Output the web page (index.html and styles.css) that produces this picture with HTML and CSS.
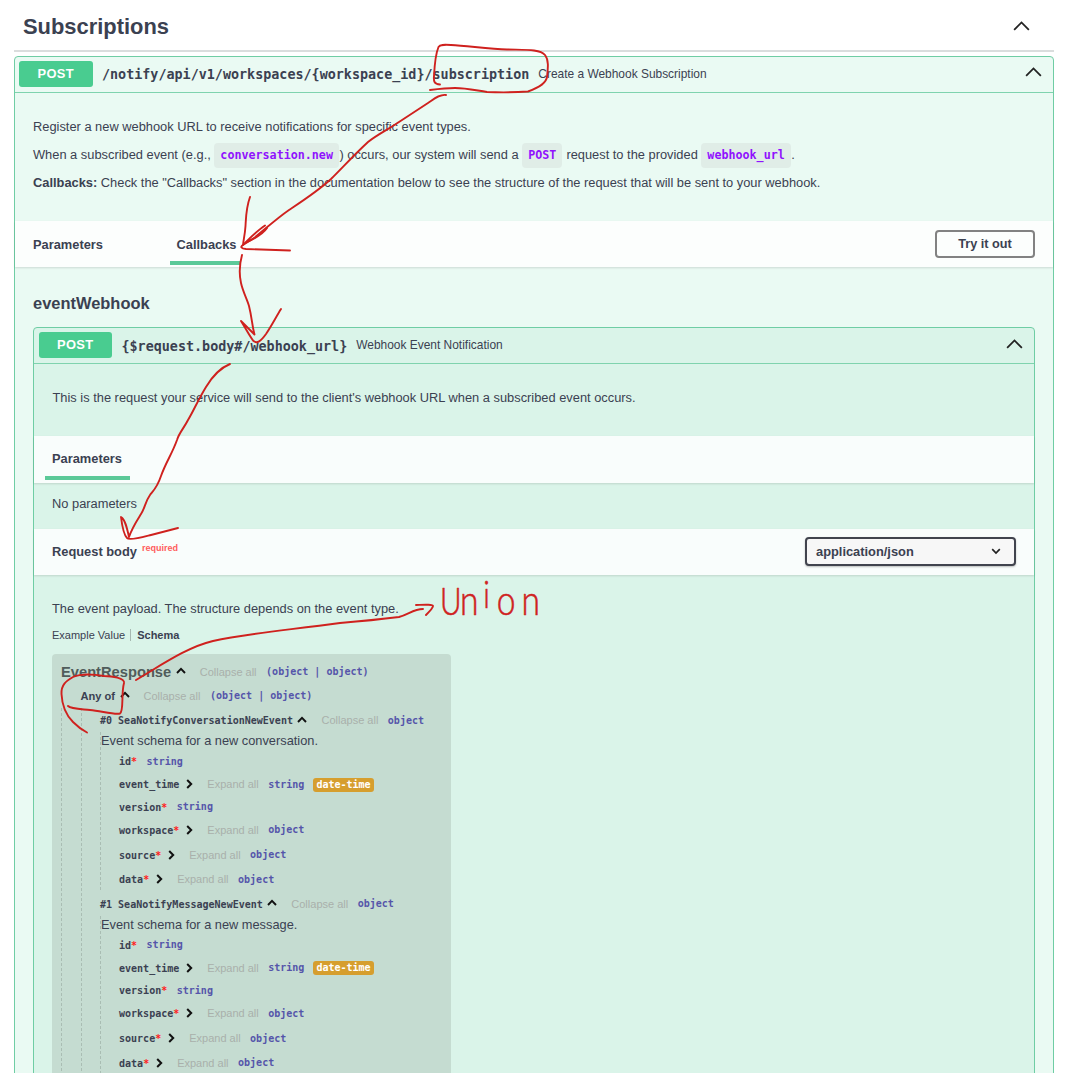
FILE: index.html
```html
<!DOCTYPE html>
<html lang="en">
<head>
<meta charset="utf-8">
<title>Subscriptions</title>
<link rel="stylesheet" href="styles.css">
</head>
<body>
<main class="page">
  <header class="tag-header">
    <h1>Subscriptions</h1>
    <svg class="chevron" viewBox="0 0 18 10"><path d="M1.2 9 9 1.2 16.8 9"/></svg>
  </header>

  <section class="opblock">
    <div class="summary">
      <span class="method">POST</span>
      <span class="path">/notify/api/v1/workspaces/{workspace_id}/subscription</span>
      <span class="summary-text">Create a Webhook Subscription</span>
      <svg class="chevron" viewBox="0 0 18 10"><path d="M1.2 9 9 1.2 16.8 9"/></svg>
    </div>
    <div class="description">
      <p>Register a new webhook URL to receive notifications for specific event types.</p>
      <p>When a subscribed event (e.g., <code>conversation.new</code>) occurs, our system will send a <code>POST</code> request to the provided <code>webhook_url</code>.</p>
      <p><b>Callbacks:</b> Check the "Callbacks" section in the documentation below to see the structure of the request that will be sent to your webhook.</p>
    </div>
    <div class="section-header tabs">
      <span class="tab tab-first">Parameters</span>
      <span class="tab tab-callbacks active">Callbacks</span>
      <button class="try">Try it out</button>
    </div>

    <div class="callbacks">
      <h2>eventWebhook</h2>
      <section class="opblock inner">
        <div class="summary">
          <span class="method">POST</span>
          <span class="path">{$request.body#/webhook_url}</span>
          <span class="summary-text">Webhook Event Notification</span>
          <svg class="chevron" viewBox="0 0 18 10"><path d="M1.2 9 9 1.2 16.8 9"/></svg>
        </div>
        <div class="description single">
          <p>This is the request your service will send to the client's webhook URL when a subscribed event occurs.</p>
        </div>
        <div class="section-header">
          <span class="tab tab-inner active">Parameters</span>
        </div>
        <p class="no-params">No parameters</p>
        <div class="section-header body-header">
          <span class="body-title">Request body</span><span class="required">required</span>
          <div class="select">application/json
            <svg viewBox="0 0 10 7"><path d="M1.2 1.2 5 5 8.8 1.2"/></svg>
          </div>
        </div>
        <div class="payload">
          <p>The event payload. The structure depends on the event type.</p>
          <div class="model-tabs"><span>Example Value</span><b>Schema</b></div>
          <div class="model">
            <div class="row root"><strong class="title">EventResponse</strong><svg class="up" viewBox="0 0 10 7"><path d="M1 6 5 1.8 9 6"/></svg><span class="toggle">Collapse all</span><span class="type">(object | object)</span></div>
            <div class="level-one">
              <div class="row any"><strong class="any-of">Any of</strong><svg class="up" viewBox="0 0 10 7"><path d="M1 6 5 1.8 9 6"/></svg><span class="toggle">Collapse all</span><span class="type">(object | object)</span></div>
              <div class="level-two">
                <article class="schema">
                  <div class="row head"><span class="name">#0 SeaNotifyConversationNewEvent</span><svg class="up" viewBox="0 0 10 7"><path d="M1 6 5 1.8 9 6"/></svg><span class="toggle">Collapse all</span><span class="type">object</span></div>
                  <div class="fields">
                    <p class="note">Event schema for a new conversation.</p>
                    <div class="row id"><span class="name">id<i>*</i></span><span class="type">string</span></div>
                    <div class="row time"><span class="name">event_time</span><svg class="right" viewBox="0 0 7 10"><path d="M1.2 1 5.2 5 1.2 9"/></svg><span class="toggle">Expand all</span><span class="type">string</span><span class="format">date-time</span></div>
                    <div class="row version"><span class="name">version<i>*</i></span><span class="type">string</span></div>
                    <div class="row obj"><span class="name">workspace<i>*</i></span><svg class="right" viewBox="0 0 7 10"><path d="M1.2 1 5.2 5 1.2 9"/></svg><span class="toggle">Expand all</span><span class="type">object</span></div>
                    <div class="row obj"><span class="name">source<i>*</i></span><svg class="right" viewBox="0 0 7 10"><path d="M1.2 1 5.2 5 1.2 9"/></svg><span class="toggle">Expand all</span><span class="type">object</span></div>
                    <div class="row last"><span class="name">data<i>*</i></span><svg class="right" viewBox="0 0 7 10"><path d="M1.2 1 5.2 5 1.2 9"/></svg><span class="toggle">Expand all</span><span class="type">object</span></div>
                  </div>
                </article>
                <article class="schema">
                  <div class="row head"><span class="name">#1 SeaNotifyMessageNewEvent</span><svg class="up" viewBox="0 0 10 7"><path d="M1 6 5 1.8 9 6"/></svg><span class="toggle">Collapse all</span><span class="type">object</span></div>
                  <div class="fields">
                    <p class="note">Event schema for a new message.</p>
                    <div class="row id"><span class="name">id<i>*</i></span><span class="type">string</span></div>
                    <div class="row time"><span class="name">event_time</span><svg class="right" viewBox="0 0 7 10"><path d="M1.2 1 5.2 5 1.2 9"/></svg><span class="toggle">Expand all</span><span class="type">string</span><span class="format">date-time</span></div>
                    <div class="row version"><span class="name">version<i>*</i></span><span class="type">string</span></div>
                    <div class="row obj"><span class="name">workspace<i>*</i></span><svg class="right" viewBox="0 0 7 10"><path d="M1.2 1 5.2 5 1.2 9"/></svg><span class="toggle">Expand all</span><span class="type">object</span></div>
                    <div class="row obj"><span class="name">source<i>*</i></span><svg class="right" viewBox="0 0 7 10"><path d="M1.2 1 5.2 5 1.2 9"/></svg><span class="toggle">Expand all</span><span class="type">object</span></div>
                    <div class="row last"><span class="name">data<i>*</i></span><svg class="right" viewBox="0 0 7 10"><path d="M1.2 1 5.2 5 1.2 9"/></svg><span class="toggle">Expand all</span><span class="type">object</span></div>
                  </div>
                </article>
              </div>
            </div>
          </div>
        </div>
      </section>
    </div>
  </section>

  <svg class="annotations" viewBox="0 0 1066 1073">
    <!-- loop round the path's last segment -->
    <path d="M440 84.500C434 84 433.500 81 434 76C434.500 66 436 53 438.500 47C440 44.500 444 44.500 451 45C468 46 490 49 507 49.500C525 50 540 49 545 55C549 60 548 68 547 77C546 84 535 89 528 91.500C514 92.500 500 92.500 487 92C474 90 466 88 455 88C446 88 438 89 430 90"/>
    <!-- arrow to the Callbacks tab -->
    <path d="M446 95C440 94 434 99 428 103L399 122C389 129 378 134 368 142C355 154 344 166 331 179C318 191 301 202 289 210C276 219 263 231 254 238L243 245"/>
    <path d="M250 197C246 208 246 217 245.500 226C245 234 243.500 240 243 245C240 247 241 248.500 246 249L290 250.500"/>
    <path d="M265 225.500C258 230 252 236 245 243C254 239 263 234 267 228"/>
    <!-- arrow to the callback path -->
    <path d="M242 255C239 266 239 274 241 283C243 292 247 299 249 306C252 318 252 325 254.500 334.500L241 321C246 329 249 335 253 340.500C257 344.500 261 341 266 334C272 325 276 317 281 309"/>
    <!-- arrow to the request body -->
    <path d="M230 364C220 368 212 377 206 387C198 400 193 412 188 420C184 428 179 433 177 440C172 454 166 462 161 476C157 488 153 491 150 495C145 502 145 508 141 514C136 522 132 528 129 537C127 528 125 519 121 517C122 525 124 535 127 538C129 541 143 537 151 535L178 528"/>
    <!-- loop round "Any of" and the arrow to its note -->
    <path d="M68 706C71 709 80 709 90 710C101 711 115 715 120 713.500C124 711 121 694 124 683C125 678 112 676 104 676C92 674 80 674 73 677C66 681 61 685 61.500 694C62 705 66 715 73 722C78 727 82 730 87 732.500"/>
    <path d="M136 680C160 666 187 647 213 641C248 633 290 630 340 623C364 621 383 619 399 617C409 614 414 609 423 609M416 605C420 605 433 604 433 606C433 608 429 612 426 615"/>
    <text class="note-text" transform="translate(440 615) scale(.8 1)"><tspan x="0">U</tspan><tspan class="wide" x="25">n</tspan><tspan x="54" dy="-7">i</tspan><tspan class="wide" x="71 102" dy="7">on</tspan></text>
  </svg>
</main>
</body>
</html>
```
FILE: styles.css
```css
* { box-sizing: border-box; }
body { margin: 0; background: #fff; color: #3b4151; font: 12.85px "Liberation Sans", Arial, sans-serif; }
p, h1, h2 { margin: 0; }
.page { position: relative; height: 1073px; overflow: hidden; padding: 0 12px 0 14px; }
.tag-header { display: flex; align-items: center; justify-content: space-between; height: 52px; margin-bottom: 4px; padding: 4px 24px 0 9px; border-bottom: 2px solid #dadddd; }
h1 { font-size: 21.9px; line-height: 26px; }
.chevron { flex: none; width: 17px; height: 10px; fill: none; stroke: #222; stroke-width: 1.9; }
.tag-header .chevron { margin-top: -2px; }

.opblock { height: 1040px; border: 1px solid #6fcda4; border-radius: 4px; background: #eafaf3; }
.summary { display: flex; align-items: center; height: 36px; padding: 0 11px 0 4px; border-bottom: 1px solid #7fd3ae; }
.summary .chevron { margin: -5px 0 0 auto; }
.inner .summary .chevron { margin-top: -2px; }
.method { width: 73.500px; height: 26px; margin-top: -1px; border-radius: 3px; background: #49cc90; color: #fff; font-weight: 700; font-size: 12.9px; line-height: 26px; text-align: center; letter-spacing: .3px; }
.path { margin-left: 9.500px; font: bold 13.4px "DejaVu Sans Mono", monospace; }
.summary-text { margin: -2px 0 0 9px; font-size: 11.950px; }
.inner .path { padding-top: 2px; }
.inner .method { margin-left: .5px; }
.inner .summary-text { margin-top: 0; }
.description { height: 128px; padding: 20px 18px 0; white-space: nowrap; }
.description p { height: 28px; line-height: 28px; }
code { display: inline-block; height: 25px; padding: 0 6px; margin: 0 .5px 0 0; border-radius: 4px; background: #e0ede7; color: #9012fe; font: bold 11.7px/25px "DejaVu Sans Mono", monospace; }
.section-header { display: flex; align-items: center; height: 46px; padding: 0 18px; background: rgba(255,255,255,.83); box-shadow: 0 1px 2px rgba(0,0,0,.13); font-weight: 700; }
.tab { display: flex; align-items: center; height: 100%; }
.tab-first { width: 137px; }
.active { height: 44px; padding: 6px 4px 0 6.500px; border-bottom: 4px solid #5bc998; align-self: flex-start; }
.tab-inner { height: 44px; width: 85px; margin-left: -7px; padding: 5px 7px 0; }
.try { width: 100px; height: 28px; margin-left: auto; border: 2px solid #828282; border-radius: 4px; background: transparent; color: #3b4151; font: bold 12.7px "Liberation Sans", Arial, sans-serif; }

.callbacks { padding: 27px 18px 0; }
h2 { height: 33px; font-size: 16.45px; line-height: 19px; }
.inner { background: #daf4e9; }
.inner .summary { height: 35.500px; }
.description.single { height: 72px; padding-left: 18.500px; }
.no-params { height: 46px; line-height: 41px; padding-left: 18px; }
.inner .section-header { height: 47px; }
.required { align-self: flex-start; margin: 14px 0 0 5px; color: #ff5c5c; font-size: 9px; line-height: 11px; }
.inner .body-header { height: 46px; }
.select { display: flex; align-items: center; justify-content: space-between; width: 211px; height: 29px; margin-left: auto; padding: 0 13px 0 9px; border: 2px solid #41444e; border-radius: 4px; background: #f7f7f7; box-shadow: 0 1px 2px rgba(0,0,0,.25); }
.select svg { width: 10px; height: 7px; fill: none; stroke: #222; stroke-width: 1.7; }

.payload { padding: 20px 18px 0; }
.payload > p { height: 28px; line-height: 28px; }
.model-tabs { display: flex; align-items: center; height: 25px; font-size: 11px; }
.model-tabs b { margin-left: 5px; padding-left: 6px; border-left: 1px solid #a6b8b1; }
.model { width: 399px; height: 430px; margin-top: 6px; padding: 6.500px 0 0 9px; border-radius: 4px; background: #c5dcd1; }
.row { display: flex; align-items: center; white-space: nowrap; }
.title { font-size: 14.7px; color: #505c5b; }
.any-of { font-size: 11.1px; }
.root { height: 23px; }
.any { height: 25px; }
.level-two { display: flex; flex-direction: column; padding-left: 19.500px; background: linear-gradient(#a9bdb3 60%, transparent 0) left top / 1px 5px repeat-y; }
.level-one { padding-left: 19.500px; background: linear-gradient(#a9bdb3 60%, transparent 0) left top / 1px 5px repeat-y; }
.any { background: linear-gradient(#c5dcd1, #c5dcd1); margin-left: -19.500px; padding-left: 19.500px; }
.head { height: 24px; }
.fields { background: linear-gradient(#a9bdb3 60%, transparent 0) left top / 1px 5px repeat-y; padding-left: 19px; }
.note { height: 18px; line-height: 17px; margin-left: -18px; font-size: 12.8px; }
.id { height: 22px; }
.time { height: 24px; }
.version { height: 21px; }
.obj { height: 25px; }
.last { height: 24.500px; }
.name, .type, .format { font: bold 10.02px/14px "DejaVu Sans Mono", monospace; }
.name { padding-top: 2px; }
.type { padding-top: 1px; }
.name i { color: #f22; font-style: normal; }
.type { margin-left: 9.500px; color: #5555aa; }
.toggle { margin-left: 14px; color: #a9b0ab; font-size: 11px; }
.up { width: 10px; height: 7px; margin: -2px 0 0 4.500px; fill: none; stroke: #111; stroke-width: 1.9; }
.right { width: 7px; height: 10px; margin-left: 6.500px; fill: none; stroke: #111; stroke-width: 2; }
.right + .toggle { margin-left: 14.500px; }
.format { margin: 1px 0 0 9px; padding: 0 3px; border-radius: 3px; background: #d69e2e; color: #fff; }

.annotations { position: absolute; left: 0; top: 0; width: 1066px; height: 1073px; pointer-events: none; fill: none; stroke: #cf211e; stroke-width: 1.9; stroke-linecap: round; stroke-linejoin: round; }
.note-text { fill: #cf211e; stroke-width: .6; font: 300 37px Lato, sans-serif; }
.wide { font-size: 42px; }
```
